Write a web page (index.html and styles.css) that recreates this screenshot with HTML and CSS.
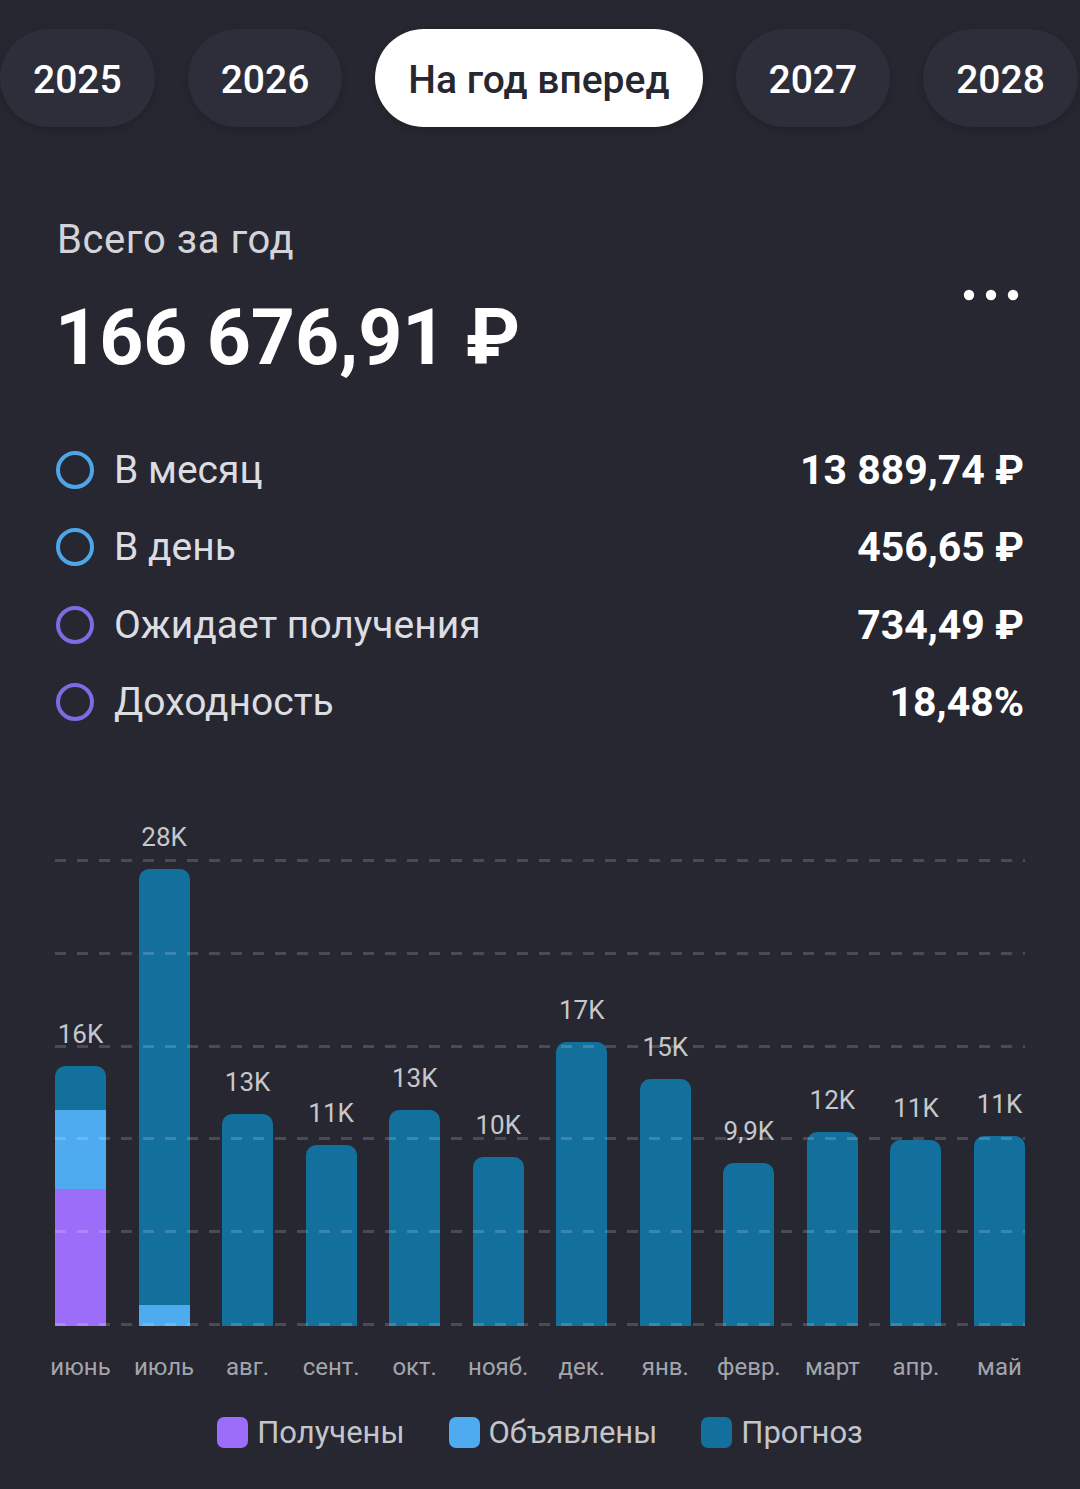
FILE: index.html
```html
<!DOCTYPE html>
<html lang="ru">
<head>
    <meta charset="UTF-8">
    <meta name="viewport" content="width=device-width, initial-scale=1.0">
    <title>Дивиденды</title>
    <link rel="stylesheet" href="styles.css">
</head>
<body>
<div class="screen">
    <nav class="tabs">
        <button class="tab">2025</button>
        <button class="tab">2026</button>
        <button class="tab tab-active">На год вперед</button>
        <button class="tab">2027</button>
        <button class="tab">2028</button>
    </nav>

    <section class="summary">
        <div class="summary-head">
            <div>
                <div class="summary-title">Всего за год</div>
                <div class="summary-total">166 676,91 ₽</div>
            </div>
            <button class="more" aria-label="Ещё">
                <svg width="56" height="12" viewBox="0 0 56 12">
                    <circle cx="6" cy="6" r="5.2" fill="#fff"/>
                    <circle cx="28" cy="6" r="5.2" fill="#fff"/>
                    <circle cx="50" cy="6" r="5.2" fill="#fff"/>
                </svg>
            </button>
        </div>

        <ul class="stats">
            <li class="stat">
                <span class="ring ring-blue"></span>
                <span class="stat-name">В месяц</span>
                <span class="stat-value">13 889,74 ₽</span>
            </li>
            <li class="stat">
                <span class="ring ring-blue"></span>
                <span class="stat-name">В день</span>
                <span class="stat-value">456,65 ₽</span>
            </li>
            <li class="stat">
                <span class="ring ring-violet"></span>
                <span class="stat-name">Ожидает получения</span>
                <span class="stat-value">734,49 ₽</span>
            </li>
            <li class="stat">
                <span class="ring ring-violet"></span>
                <span class="stat-name">Доходность</span>
                <span class="stat-value">18,48%</span>
            </li>
        </ul>
    </section>

    <section class="chart">
        <div class="plot">
            <div class="grid-lines">
                <div class="line"></div>
                <div class="line"></div>
                <div class="line"></div>
                <div class="line"></div>
                <div class="line"></div>
                <div class="line"></div>
            </div>
            <div class="bars">
                <div class="col">
                    <div class="value">16K</div>
                    <div class="bar">
                        <div class="seg seg-forecast" style="height:44px"></div>
                        <div class="seg seg-announced" style="height:79px"></div>
                        <div class="seg seg-received" style="height:137px"></div>
                    </div>
                </div>
                <div class="col">
                    <div class="value">28K</div>
                    <div class="bar">
                        <div class="seg seg-forecast" style="height:436px"></div>
                        <div class="seg seg-announced" style="height:21px"></div>
                    </div>
                </div>
                <div class="col">
                    <div class="value">13K</div>
                    <div class="bar"><div class="seg seg-forecast" style="height:212px"></div></div>
                </div>
                <div class="col">
                    <div class="value">11K</div>
                    <div class="bar"><div class="seg seg-forecast" style="height:181px"></div></div>
                </div>
                <div class="col">
                    <div class="value">13K</div>
                    <div class="bar"><div class="seg seg-forecast" style="height:216px"></div></div>
                </div>
                <div class="col">
                    <div class="value">10K</div>
                    <div class="bar"><div class="seg seg-forecast" style="height:169px"></div></div>
                </div>
                <div class="col">
                    <div class="value">17K</div>
                    <div class="bar"><div class="seg seg-forecast" style="height:284px"></div></div>
                </div>
                <div class="col">
                    <div class="value">15K</div>
                    <div class="bar"><div class="seg seg-forecast" style="height:247px"></div></div>
                </div>
                <div class="col">
                    <div class="value">9,9K</div>
                    <div class="bar"><div class="seg seg-forecast" style="height:163px"></div></div>
                </div>
                <div class="col">
                    <div class="value">12K</div>
                    <div class="bar"><div class="seg seg-forecast" style="height:194px"></div></div>
                </div>
                <div class="col">
                    <div class="value">11K</div>
                    <div class="bar"><div class="seg seg-forecast" style="height:186px"></div></div>
                </div>
                <div class="col">
                    <div class="value">11K</div>
                    <div class="bar"><div class="seg seg-forecast" style="height:190px"></div></div>
                </div>
            </div>
        </div>

        <div class="months">
            <span>июнь</span>
            <span>июль</span>
            <span>авг.</span>
            <span>сент.</span>
            <span>окт.</span>
            <span>нояб.</span>
            <span>дек.</span>
            <span>янв.</span>
            <span>февр.</span>
            <span>март</span>
            <span>апр.</span>
            <span>май</span>
        </div>

        <div class="legend">
            <span class="legend-item"><i class="swatch seg-received"></i>Получены</span>
            <span class="legend-item"><i class="swatch seg-announced"></i>Объявлены</span>
            <span class="legend-item"><i class="swatch seg-forecast"></i>Прогноз</span>
        </div>
    </section>
</div>
</body>
</html>
```

FILE: styles.css
```css
*{
    margin:0;
    padding:0;
    box-sizing:border-box;
}
body{
    background-color:#262730;
    font-family:Roboto, "Noto Sans", sans-serif;
    color:#fff;
    width:1080px;
    height:1489px;
    overflow:hidden;
}
button{
    font-family:inherit;
    border:none;
    background:none;
    color:inherit;
}

/* tabs */
.tabs{
    display:flex;
    gap:33px;
    margin-top:29px;
}
.tab{
    height:98px;
    padding:4px 33px 0;
    border-radius:49px;
    background-color:#2d2e39;
    box-shadow:0 3px 10px rgba(0,0,0,.18);
    font-size:39px;
    font-weight:500;
    color:#fff;
    white-space:nowrap;
}
.tab-active{
    background-color:#fff;
    color:#262730;
}

/* summary */
.summary{
    padding:0 55px;
    margin-top:90px;
}
.summary-head{
    display:flex;
    justify-content:space-between;
    align-items:flex-start;
}
.summary-title{
    font-size:40px;
    line-height:45px;
    letter-spacing:.6px;
    color:#d3d4d9;
    padding-left:2px;
}
.summary-total{
    margin-top:29px;
    font-size:77px;
    line-height:94px;
    font-weight:700;
}
.more{
    margin-top:72px;
    margin-right:6px;
    display:flex;
}
.stats{
    list-style:none;
    margin-top:46px;
}
.stat{
    display:flex;
    align-items:center;
    height:77.5px;
}
.ring{
    width:38px;
    height:38px;
    border-radius:50%;
    border:4px solid #4da6e8;
    margin-left:1px;
    margin-right:20px;
}
.ring-violet{
    border-color:#7b6ce2;
}
.stat-name{
    flex:1;
    font-size:39px;
    color:#dcdde2;
}
.stat-value{
    font-size:41px;
    font-weight:700;
    margin-right:1px;
}

/* chart */
.chart{
    padding:0 55px;
    margin-top:65px;
}
.plot{
    position:relative;
    height:520px;
}
.grid-lines{
    position:absolute;
    left:0;
    right:0;
    bottom:0;
    height:467px;
    display:flex;
    flex-direction:column;
    justify-content:space-between;
    pointer-events:none;
    z-index:2;
}
.line{
    height:3px;
    background:repeating-linear-gradient(90deg, rgba(255,255,255,.17) 0 11px, transparent 11px 22px);
}
.bars{
    display:grid;
    grid-template-columns:repeat(12, minmax(0, 1fr));
    column-gap:32.5px;
    height:100%;
}
.col{
    display:flex;
    flex-direction:column;
    justify-content:flex-end;
    align-items:center;
}
.value{
    font-size:26px;
    line-height:30px;
    margin-bottom:17px;
    color:#c6c7cd;
    white-space:nowrap;
}
.bar{
    width:100%;
    display:flex;
    flex-direction:column;
    border-radius:10px 10px 0 0;
    overflow:hidden;
}
.seg-forecast{
    background-color:#136f9b;
}
.seg-announced{
    background-color:#4eabf0;
}
.seg-received{
    background-color:#9c6df8;
}

.months{
    display:grid;
    grid-template-columns:repeat(12, minmax(0, 1fr));
    column-gap:32.5px;
    margin-top:26px;
}
.months span{
    display:flex;
    justify-content:center;
    font-size:24px;
    line-height:30px;
    color:#a4a5ac;
    white-space:nowrap;
}

.legend{
    display:flex;
    justify-content:center;
    gap:44px;
    margin-top:35px;
}
.legend-item{
    display:flex;
    align-items:center;
    gap:9px;
    font-size:31px;
    line-height:31px;
    color:#c4c5cb;
}
.swatch{
    width:31px;
    height:31px;
    border-radius:7px;
}
```
